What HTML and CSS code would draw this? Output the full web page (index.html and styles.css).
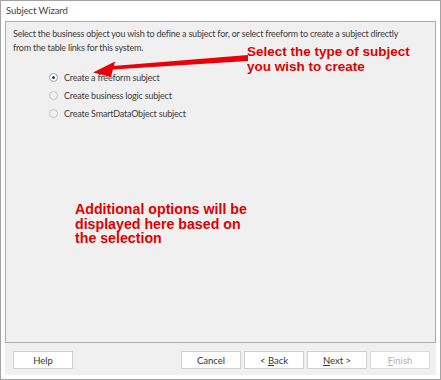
FILE: index.html
```html
<!DOCTYPE html>
<html lang="en">
<head>
    <meta charset="UTF-8">
    <title>Subject Wizard</title>
    <link rel="stylesheet" href="styles.css">
</head>
<body>

    <div class="window">
        <div class="title-bar">Subject Wizard</div>

        <div class="panel">
            <p class="intro">Select the business object you wish to define a subject for, or select freeform to create a subject directly<br>from the table links for this system.</p>

            <div class="choices">
                <label class="choice"><span class="radio checked"></span>Create a freeform subject</label>
                <label class="choice"><span class="radio"></span>Create business logic subject</label>
                <label class="choice"><span class="radio"></span>Create SmartDataObject subject</label>
            </div>

            <!-- callouts drawn over the screenshot -->
            <svg class="arrow" width="441" height="100" viewBox="0 0 441 100">
                <polygon points="248,55 248,61 113,69.5 113,66" fill="#e8000b"/>
                <polygon points="93,72.5 115,61.5 111,77" fill="#e8000b"/>
            </svg>
            <div class="callout callout-top">Select the type of subject<br>you wish to create</div>
            <div class="callout callout-bottom">Additional options will be<br>displayed here based on<br>the selection</div>
        </div>

        <div class="button-bar">
            <button class="btn">Help</button>
            <div class="nav-buttons">
                <button class="btn">Cancel</button>
                <button class="btn">&lt; <u>B</u>ack</button>
                <button class="btn"><u>N</u>ext &gt;</button>
                <button class="btn" disabled><u>F</u>inish</button>
            </div>
        </div>
    </div>

</body>
</html>
```

FILE: styles.css
```css
body {
    margin: 0;
    background: #ffffff;
    font-family: Lato, 'Noto Sans', sans-serif;
    font-size: 9px;
    letter-spacing: -0.08px;
    color: #333;
}

.window {
    width: 441px;
    height: 380px;
    box-sizing: border-box;
    border: 1px solid #a3a3a3;
    background: #ffffff;
    display: flex;
    flex-direction: column;
}

.title-bar {
    height: 20px;
    line-height: 20px;
    padding-left: 5px;
    font-size: 9.5px;
    color: #444;
}

.panel {
    position: relative;
    height: 322px;
    box-sizing: border-box;
    margin: 0 4px;
    border: 1px solid #adadad;
    background: #f0f0f0;
    padding: 5px 7px;
}

.intro {
    margin: 0;
    line-height: 14px;
    white-space: nowrap;
    letter-spacing: -0.22px;
    color: #3c3c3c;
}

.choices {
    display: flex;
    flex-direction: column;
    margin: 13px 0 0 36px;
}

.choice {
    display: flex;
    align-items: center;
    height: 18px;
    letter-spacing: -0.2px;
    color: #3c3c3c;
}

.radio {
    width: 7px;
    height: 7px;
    border: 1px solid #c2c2c2;
    border-radius: 50%;
    background: #f2f2f2;
    margin-right: 6px;
    display: flex;
    align-items: center;
    justify-content: center;
}

.radio.checked {
    border-color: #9aa3b0;
    background: #ffffff;
}

.radio.checked::after {
    content: "";
    width: 3px;
    height: 3px;
    border-radius: 50%;
    background: #1d3f7a;
}

.arrow {
    position: absolute;
    left: -6px;
    top: -22px;
}

.callout {
    position: absolute;
    font-family: 'Liberation Sans', Arial, sans-serif;
    font-weight: bold;
    font-size: 13.5px;
    line-height: 14.5px;
    letter-spacing: 0;
    color: #e00000;
}

.callout-top {
    left: 241px;
    top: 23px;
}

.callout-bottom {
    left: 69px;
    top: 180px;
    font-size: 14.2px;
}

.button-bar {
    height: 32px;
    box-sizing: border-box;
    margin: 0 4px;
    padding: 8px 6px 6px 8px;
    background: #f0f0f0;
    display: flex;
    justify-content: space-between;
}

.nav-buttons {
    display: flex;
    gap: 3px;
}

.btn {
    width: 60px;
    height: 18px;
    padding: 0;
    border: 1px solid #cfcfcf;
    background: #ffffff;
    font-family: Lato, 'Noto Sans', sans-serif;
    font-size: 9.5px;
    color: #333;
}

.btn:disabled {
    color: #b0b0b0;
    border-color: #dcdcdc;
}
```
